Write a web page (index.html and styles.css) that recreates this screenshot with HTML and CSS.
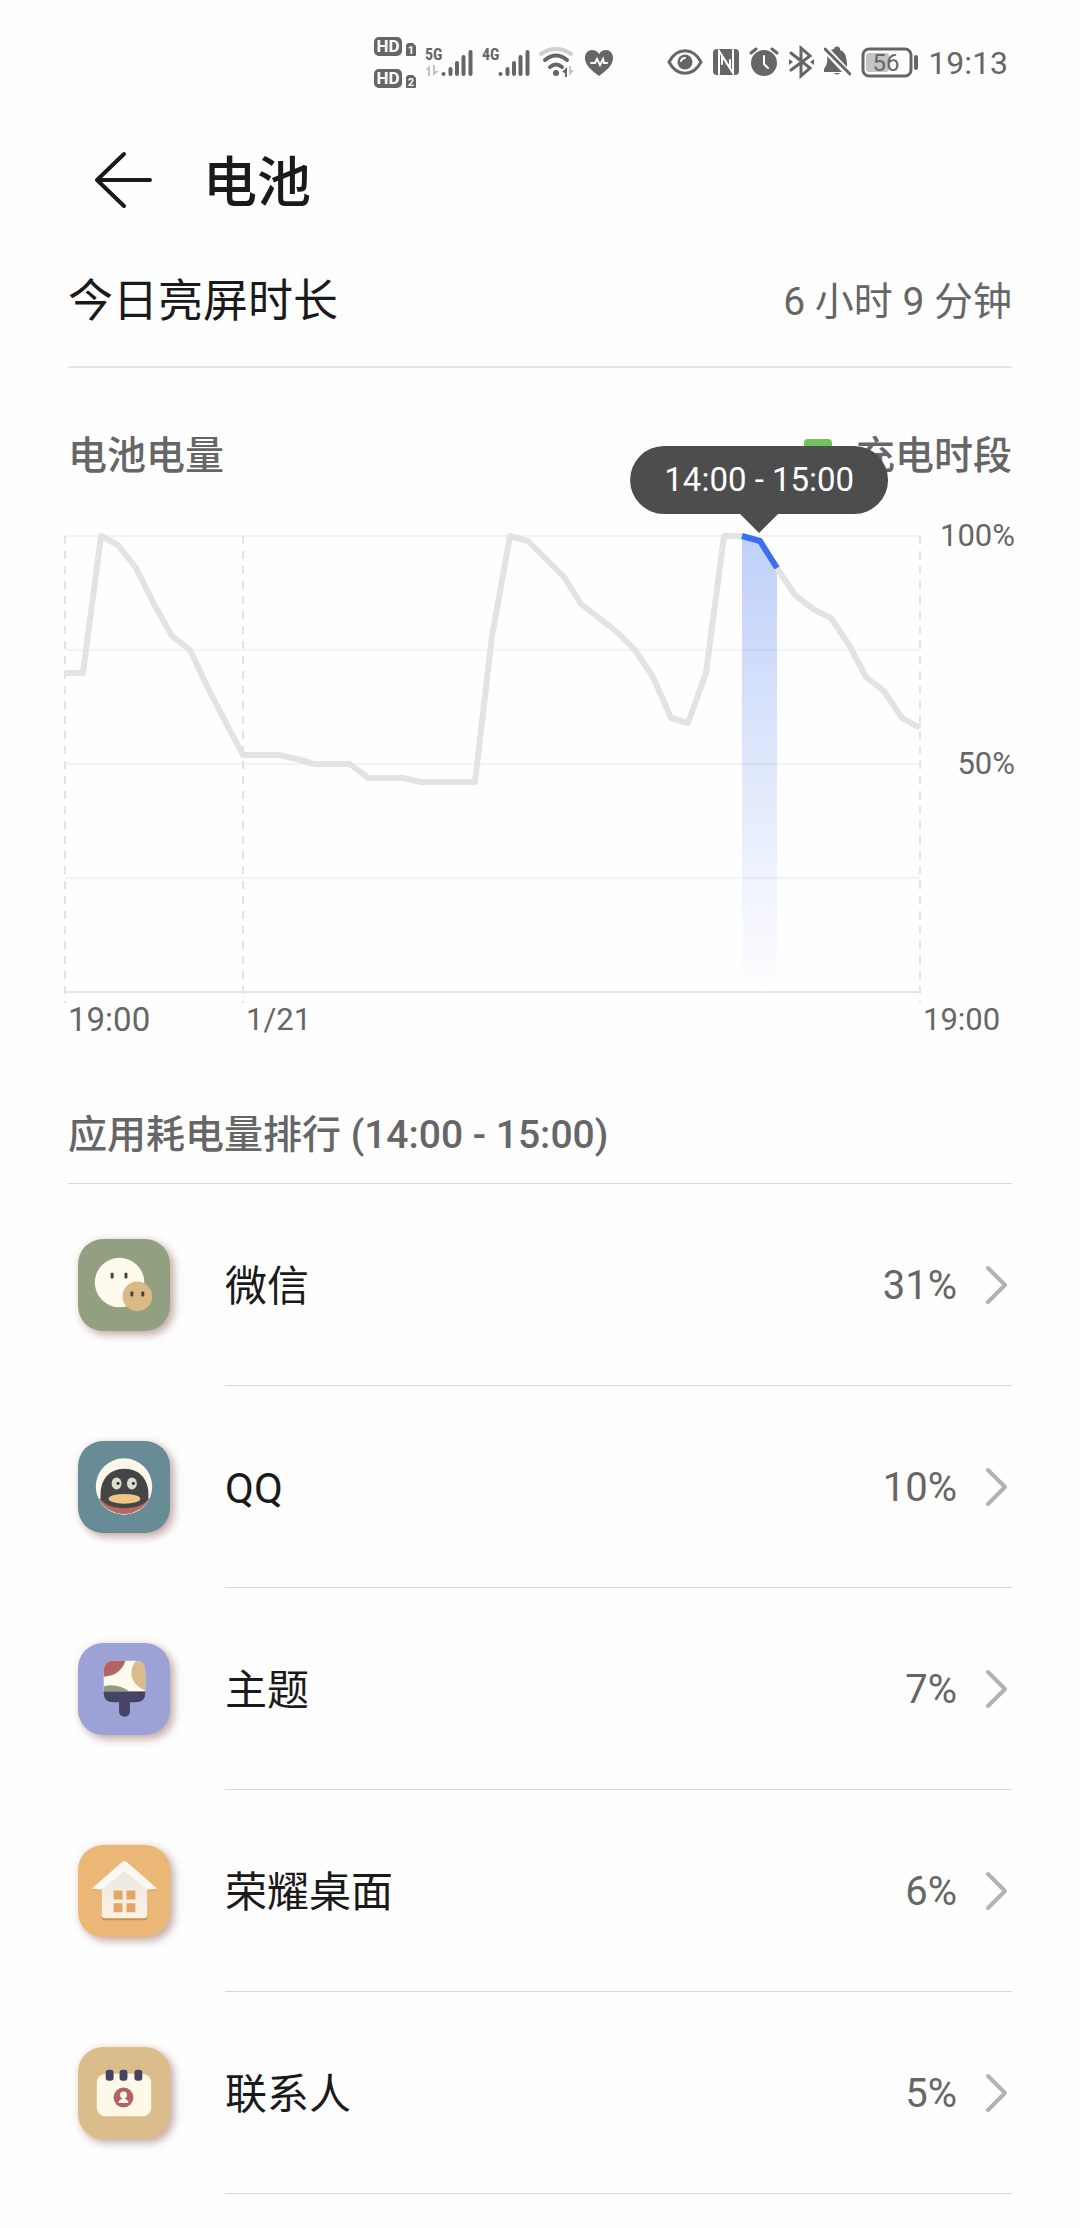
FILE: index.html
```html
<!DOCTYPE html>
<html lang="zh-CN">
<head>
<meta charset="utf-8">
<meta name="viewport" content="width=device-width, initial-scale=1">
<title>电池</title>
<link rel="stylesheet" href="styles.css">
</head>
<body>
<div class="status-bar">
  <div class="status-group">
    <svg class="status-icon" width="42" height="56" viewBox="0 0 42 56">
      <rect x="0" y="2" width="28" height="19" rx="5"/>
      <text class="hd-text" x="14" y="17" text-anchor="middle">HD</text>
      <path d="M34 8h5l3 3v9a1 1 0 0 1-1 1h-8a1 1 0 0 1-1-1v-10z"/>
      <text class="sim-text" x="37" y="19" text-anchor="middle">1</text>
      <rect x="0" y="34" width="28" height="19" rx="5"/>
      <text class="hd-text" x="14" y="49" text-anchor="middle">HD</text>
      <path d="M34 40h5l3 3v9a1 1 0 0 1-1 1h-8a1 1 0 0 1-1-1v-10z"/>
      <text class="sim-text" x="37" y="51" text-anchor="middle">2</text>
    </svg>
    <svg class="status-icon" width="48" height="56" viewBox="0 0 48 56">
      <text class="net-text" x="0" y="25">5G</text>
      <path class="bars" d="M18.500 39v0M25.500 39v-5M32 39v-11M38.500 39v-17M45.500 39v-22"/>
      <path class="faint" d="M0 35l5-5v11h-2v-6zM8 30h2v6h4l-6 5z"/>
    </svg>
    <svg class="status-icon" width="48" height="56" viewBox="0 0 48 56">
      <text class="net-text" x="0" y="25">4G</text>
      <path class="bars" d="M18.500 39v0M25.500 39v-5M32 39v-11M38.500 39v-17M45.500 39v-22"/>
    </svg>
    <svg class="status-icon" width="36" height="56" viewBox="0 0 36 56">
      <path class="arc faint-line" d="M2 19q15-10 30 0"/>
      <path class="arc" d="M6 25q11-9 22 0M11 32q6-5 12 0"/>
      <circle cx="17" cy="38" r="3"/>
      <path d="M23 37l5-5v10h-2v-4z"/>
      <path class="faint" d="M30 31h2v4h3l-5 6z"/>
    </svg>
    <svg class="status-icon" width="30" height="56" viewBox="0 0 30 56">
      <path d="M15 41C7 35 1 30 1 23c0-5 3-8 7-8 3 0 5 1 7 4 2-3 4-4 7-4 4 0 7 3 7 8 0 7-6 12-14 18z"/>
      <path class="knock" d="M7 28h4l2-4 3 6 3-6 1 4h3"/>
    </svg>
  </div>
  <div class="status-group">
    <svg class="status-icon" width="36" height="56" viewBox="0 0 36 56">
      <path class="line" d="M2 27C10 12 26 12 34 27C26 42 10 42 2 27z"/>
      <circle cx="18" cy="27" r="7.500"/>
      <path class="knock" d="M14 26q1-3 4-3"/>
    </svg>
    <svg class="status-icon" width="26" height="56" viewBox="0 0 26 56">
      <rect x="0" y="14" width="26" height="26" rx="4"/>
      <path class="knock" d="M6 39V16L17 33V25M20 15V38L9 21V29"/>
    </svg>
    <svg class="status-icon" width="30" height="56" viewBox="0 0 30 56">
      <circle cx="15" cy="28" r="13"/>
      <path class="knock" d="M15 21v8l4 4"/>
      <path class="line" d="M2 18l5-4M28 18l-5-4"/>
    </svg>
    <svg class="status-icon" width="25" height="56" viewBox="0 0 25 56">
      <path class="line" d="M2 18l19 15-9 8V13l9 8L2 35"/>
      <path d="M0 24l4 3-4 3zM25 24l-4 3 4 3z"/>
    </svg>
    <svg class="status-icon" width="27" height="56" viewBox="0 0 27 56">
      <path d="M3 21C4 28 2 31 0 34v3h18zM7 15l16 17c0-4 0-7-1-9 0-4-3-7-6-8a3 3 0 0 0-6-1zM10 38h6q-3 3-6 0z"/>
      <path class="line" d="M1 14l25 25"/>
    </svg>
    <svg class="status-icon" width="57" height="56" viewBox="0 0 57 56">
      <rect class="faint" x="5" y="18" width="23" height="19" rx="3"/>
      <rect class="line" x="2" y="14" width="48" height="27" rx="6"/>
      <rect x="53" y="20" width="4" height="15" rx="2"/>
      <text class="level-text" x="25" y="36" text-anchor="middle">56</text>
    </svg>
    <span class="clock">19:13</span>
  </div>
</div>

<header class="app-bar">
  <button class="back" type="button" aria-label="返回">
    <svg width="60" height="60" viewBox="0 0 60 60"><path d="M57 30H4M31 4L4 30l27 26"/></svg>
  </button>
  <h1 class="title">电池</h1>
</header>

<main>
  <section class="screen-time">
    <span class="screen-time-label">今日亮屏时长</span>
    <span class="screen-time-value">6 小时 9 分钟</span>
  </section>

  <section class="level">
    <div class="level-head">
      <h2 class="subtitle">电池电量</h2>
      <div class="legend"><span class="swatch"></span>充电时段</div>
    </div>
    <div class="chart">
      <div class="plot">
        <svg class="plot-svg" viewBox="0 0 855 456" preserveAspectRatio="none">
          <defs>
            <linearGradient id="band" x1="0" y1="0" x2="0" y2="1">
              <stop offset="0" stop-color="#3a6fee" stop-opacity=".32"/>
              <stop offset="1" stop-color="#3a6fee" stop-opacity="0"/>
            </linearGradient>
          </defs>
          <path class="grid-line" d="M0 0H855M0 114H855M0 228H855M0 342H855"/>
          <path class="dash-line" d="M0 0V467M178 0V467M855 0V467"/>
          <path class="base-line" d="M0 456H855"/>
          <path fill="url(#band)" d="M677 0L695 5L712 32V456H677z"/>
          <polyline class="curve" points="0,137 18,137 36,0 53,9 71,32 89,68 107,100 125,114 142,150 160,185 178,219 196,219 214,219 232,223 249,228 267,228 285,228 303,242 321,242 338,242 356,246 374,246 392,246 410,246 427,100 445,0 463,5 481,23 499,41 516,68 534,82 552,96 570,114 588,141 606,182 623,187 641,137 659,0 677,0"/>
          <polyline class="curve" points="712,32 730,59 748,73 766,82 784,109 801,141 819,155 837,182 855,192"/>
          <polyline class="curve active" points="677,0 695,5 712,32"/>
        </svg>
        <div class="tooltip">14:00 - 15:00</div>
      </div>
      <div class="y-axis"><span>100%</span><span>50%</span></div>
    </div>
    <div class="x-axis"><span class="start">19:00</span><span>1/21</span><span>19:00</span></div>
  </section>

  <section class="ranking">
    <h2 class="subtitle ranking-title">应用耗电量排行 (14:00 - 15:00)</h2>
    <ul class="apps">
      <li><a class="app" href="#wechat">
        <svg class="app-icon green" viewBox="0 0 93 93">
          <circle cx="42" cy="44" r="25" fill="#fefaee"/>
          <circle cx="60" cy="58" r="15" fill="#d9b985"/>
          <g fill="#444"><rect x="33" y="34" width="3" height="6" rx="1"/><rect x="47" y="34" width="3" height="6" rx="1"/><rect x="53" y="53" width="3" height="5" rx="1"/><rect x="64" y="53" width="3" height="5" rx="1"/></g>
        </svg>
        <span class="app-body"><span class="app-name">微信</span><span class="app-share">31%</span>
        <svg class="chevron" viewBox="0 0 24 40"><path d="M4 3l17 17L4 37"/></svg></span>
      </a></li>
      <li><a class="app" href="#qq">
        <svg class="app-icon teal" viewBox="0 0 93 93">
          <circle cx="46.500" cy="46" r="28.500" fill="#fcf7ea"/>
          <path d="M21 58A28.500 28.500 0 0 0 72 58z" fill="#b06a5e"/>
          <path d="M23 59C21 40 31 28 47 28s26 12 24 31C63 71 31 71 23 59z" fill="#454447"/>
          <ellipse cx="39" cy="43" rx="5" ry="6" fill="#deddd1"/><ellipse cx="54.500" cy="43" rx="5" ry="6" fill="#deddd1"/>
          <circle cx="40.500" cy="43" r="1.500" fill="#222"/><circle cx="56" cy="43" r="1.500" fill="#222"/>
          <ellipse cx="47" cy="58.500" rx="16" ry="5" fill="#efc687"/>
        </svg>
        <span class="app-body"><span class="app-name">QQ</span><span class="app-share">10%</span>
        <svg class="chevron" viewBox="0 0 24 40"><path d="M4 3l17 17L4 37"/></svg></span>
      </a></li>
      <li><a class="app" href="#themes">
        <svg class="app-icon violet" viewBox="0 0 93 93">
          <path d="M26 49V28q0-10 10-10H58q10 0 10 10V49z" fill="#fefaee"/>
          <path d="M26 34V28q0-10 10-10H48Q43 33 26 34z" fill="#b26463"/>
          <path d="M59 18Q68 19 68 28V48Q54 42 54 30Q54 23 59 18z" fill="#dbbb89"/>
          <path d="M26 44Q39 40 52 49H26z" fill="#8f9d80"/>
          <path d="M26 49H68v2q0 9-10 9H52.500V69.500a5.500 5 0 0 1-11 0V60H36q-10 0-10-9z" fill="#464366"/>
        </svg>
        <span class="app-body"><span class="app-name">主题</span><span class="app-share">7%</span>
        <svg class="chevron" viewBox="0 0 24 40"><path d="M4 3l17 17L4 37"/></svg></span>
      </a></li>
      <li><a class="app" href="#launcher">
        <svg class="app-icon orange" viewBox="0 0 93 93">
          <defs><linearGradient id="wall" x1="0" y1="0" x2="0" y2="1"><stop offset="0" stop-color="#e9e7e4"/><stop offset="1" stop-color="#fdf1e4"/></linearGradient></defs>
          <path d="M24 42L47 22 70 42V73q0 3-3 3H27q-3 0-3-3z" fill="#c98f52"/>
          <path d="M14 46L47 19 80 46H68L47 29 26 46z" fill="#d9a363"/>
          <path d="M24 40L47 22 70 40V71q0 3-3 3H27q-3 0-3-3z" fill="url(#wall)"/>
          <path d="M14 44L45 17q2-1 4 0L80 44Q77 45 70 45L47 26 24 45Q17 45 14 44z" fill="#fbf8f3"/>
          <path d="M36 46h9v9h-9zM49 46h9v9h-9zM36 59h9v9h-9zM49 59h9v9h-9z" fill="#dfa765"/>
        </svg>
        <span class="app-body"><span class="app-name">荣耀桌面</span><span class="app-share">6%</span>
        <svg class="chevron" viewBox="0 0 24 40"><path d="M4 3l17 17L4 37"/></svg></span>
      </a></li>
      <li><a class="app" href="#contacts">
        <svg class="app-icon sand" viewBox="0 0 93 93">
          <rect x="19" y="27" width="55" height="43" rx="9" fill="#fef8e9"/>
          <g fill="#454467"><rect x="28" y="23" width="8" height="11" rx="3"/><rect x="42" y="23" width="8" height="11" rx="3"/><rect x="57" y="23" width="8" height="11" rx="3"/></g>
          <circle cx="46" cy="51" r="10" fill="#b26260"/>
          <circle cx="46" cy="48.500" r="3.500" fill="#fef8e9"/>
          <path d="M44.500 50h3v2.500q3.500 1 3.500 4H41q0-3 3.500-4z" fill="#fef8e9"/>
        </svg>
        <span class="app-body"><span class="app-name">联系人</span><span class="app-share">5%</span>
        <svg class="chevron" viewBox="0 0 24 40"><path d="M4 3l17 17L4 37"/></svg></span>
      </a></li>
    </ul>
  </section>
</main>
</body>
</html>
```

FILE: styles.css
```css
:root {
  --ink: #1a1a1a;
  --muted: #666;
  --rule: #e5e5e5;
  --side: 68px;
}

* { box-sizing: border-box; }

body {
  margin: 0;
  min-height: 100vh;
  background: #fefefe;
  color: var(--ink);
  font-family: Roboto, "Noto Sans CJK SC", sans-serif;
}

h1, h2, ul { margin: 0; padding: 0; }
ul { list-style: none; }
svg { display: block; flex: none; }

/* Status bar */
.status-bar {
  display: flex;
  justify-content: flex-end;
  gap: 53px;
  padding: 35px 72px 0 0;
  color: var(--muted);
}
.status-group { display: flex; align-items: center; gap: 9px; }
.status-group + .status-group { gap: 10px; }
.status-icon { fill: var(--muted); }
.status-icon .line, .status-icon .arc {
  fill: none;
  stroke: var(--muted);
  stroke-width: 3;
  stroke-linecap: round;
}
.status-icon .arc { stroke-width: 4; }
.status-icon .bars { fill: none; stroke: var(--muted); stroke-width: 4; stroke-linecap: round; }
.status-icon .faint { fill: #c4c4c4; }
.status-icon .faint-line { stroke: #d0d0d0; }
.status-icon .knock { fill: none; stroke: #fefefe; stroke-width: 2; stroke-linecap: round; }
.hd-text { fill: #fefefe; font-size: 17px; font-weight: 700; }
.sim-text { fill: #fefefe; font-size: 11px; font-weight: 700; }
.net-text { font-family: "Roboto Condensed", Roboto, sans-serif; font-size: 16px; font-weight: 700; }
.level-text { font-size: 24px; }
.clock { font-size: 32px; line-height: 40px; }

/* Title bar */
.app-bar {
  display: flex;
  align-items: center;
  gap: 50px;
  height: 144px;
  padding: 34px 93px 0;
}
.back { padding: 0; border: 0; background: none; cursor: pointer; }
.back path {
  fill: none;
  stroke: var(--ink);
  stroke-width: 4;
  stroke-linecap: round;
  stroke-linejoin: round;
}
.title { padding-top: 8px; font-size: 54px; line-height: 64px; font-weight: 500; }

/* Screen-on time */
.screen-time {
  display: flex;
  align-items: center;
  justify-content: space-between;
  margin: 0 var(--side);
  padding: 33px 0 30px;
  border-bottom: 2px solid var(--rule);
}
.screen-time-label { font-size: 45px; line-height: 68px; }
.screen-time-value { font-size: 39px; line-height: 68px; color: var(--muted); }

/* Battery level chart */
.level-head {
  display: flex;
  align-items: center;
  justify-content: space-between;
  padding: 58px var(--side) 0;
  line-height: 60px;
}
.subtitle, .legend { font-size: 39px; font-weight: 500; color: var(--muted); }
.legend { display: flex; align-items: center; gap: 24px; }
.swatch { width: 28px; height: 34px; border-radius: 4px; background: #6dc55c; }

.chart {
  display: grid;
  grid-template-columns: 1fr 95px;
  height: 456px;
  margin: 50px 65px 0;
}
.plot { position: relative; min-width: 0; }
.plot-svg { width: 100%; height: 456px; overflow: visible; }
.plot-svg path, .plot-svg polyline { vector-effect: non-scaling-stroke; }
.grid-line { stroke: #f3f3f3; stroke-width: 2; fill: none; }
.base-line { stroke: var(--rule); stroke-width: 2; fill: none; }
.dash-line { stroke: #e3e3e3; stroke-width: 2; stroke-dasharray: 8 7; fill: none; }
.curve { fill: none; stroke: #e3e3e3; stroke-width: 6; stroke-linejoin: round; }
.curve.active { stroke: #3a6fee; }

.tooltip {
  position: absolute;
  left: 81.2%;
  bottom: calc(100% + 22px);
  padding: 0 34px;
  border-radius: 34px;
  background: #4d4d4d;
  color: #fff;
  font-size: 33px;
  line-height: 68px;
  white-space: nowrap;
  transform: translateX(-50%);
}
.tooltip::after {
  content: "";
  position: absolute;
  top: 100%;
  left: 50%;
  margin-left: -19px;
  border: 19px solid transparent;
  border-top-color: #4d4d4d;
  border-bottom: 0;
}

.y-axis {
  display: grid;
  grid-template-rows: 1fr 1fr;
  justify-items: end;
  color: var(--muted);
  font-size: 31px;
  line-height: 40px;
}
.y-axis span { margin-top: -20px; }

.x-axis {
  display: grid;
  grid-template-columns: 178fr 677fr 92px;
  margin: 8px 65px 0;
  padding-left: 3px;
  color: var(--muted);
  font-size: 31px;
  line-height: 40px;
}
.x-axis .start { font-size: 33px; }

/* App ranking */
.ranking-title {
  margin: 0 var(--side);
  padding: 65px 0 18px;
  border-bottom: 1px solid #d8d8d8;
  line-height: 60px;
}
.apps { padding-bottom: 32px; }
.app {
  display: flex;
  align-items: stretch;
  gap: 55px;
  padding: 0 var(--side) 0 78px;
  color: inherit;
  text-decoration: none;
}
.app-icon {
  align-self: center;
  width: 92px;
  height: 92px;
  border-radius: 25px;
  box-shadow: 4px 4px 8px rgba(130, 85, 75, .45), 0 0 10px rgba(220, 180, 160, .25);
}
.green { background: #92a081; }
.teal { background: #678c96; }
.violet { background: #9ca2d5; }
.orange { background: #eab776; }
.sand { background: #dbbc8b; }
.app-body {
  display: flex;
  flex: 1;
  align-items: center;
  min-height: 202px;
  border-bottom: 1px solid #d8d8d8;
}
.app-name { flex: 1; padding-top: 4px; font-size: 42px; line-height: 60px; }
.app-share { padding-top: 2px; font-size: 40px; line-height: 60px; color: var(--muted); }
.chevron { width: 24px; height: 40px; margin: 0 4px 0 27px; }
.chevron path {
  fill: none;
  stroke: #b2b2b2;
  stroke-width: 4;
  stroke-linecap: round;
  stroke-linejoin: round;
}
```
